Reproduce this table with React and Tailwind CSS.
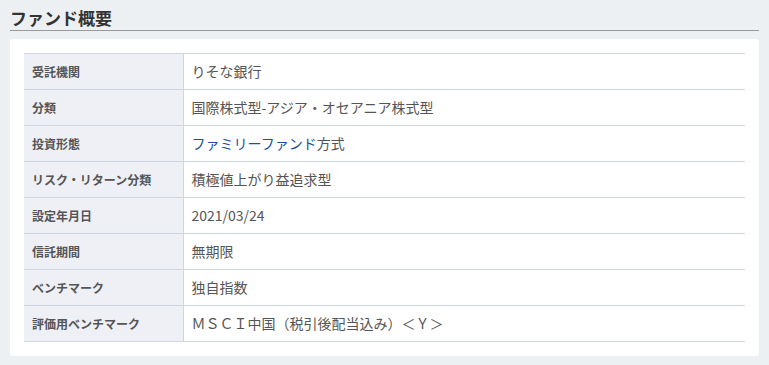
import React from "react";

const rows = [
  { label: "受託機関", value: "りそな銀行" },
  { label: "分類", value: "国際株式型-アジア・オセアニア株式型" },
  {
    label: "投資形態",
    value: (
      <>
        <a href="#" className="text-[#1d4f9e]">
          ファミリーファンド
        </a>
        方式
      </>
    ),
  },
  { label: "リスク・リターン分類", value: "積極値上がり益追求型" },
  { label: "設定年月日", value: "2021/03/24" },
  { label: "信託期間", value: "無期限" },
  { label: "ベンチマーク", value: "独自指数" },
  { label: "評価用ベンチマーク", value: "ＭＳＣＩ中国（税引後配当込み）＜Ｙ＞" },
];

const App = () => {
  return (
    <div
      className="min-h-screen bg-[#edf0f3] px-[10px] pt-[8px]"
      style={{ fontFamily: '"Noto Sans CJK JP", "Noto Sans", sans-serif' }}
    >
      <h2 className="border-b border-[#9a9a9a] pb-[2px] text-[17px] font-bold leading-[20px] text-[#333]">
        ファンド概要
      </h2>

      <div className="mt-[8px] rounded-[3px] bg-white px-[14px] pt-[14px] pb-[14px]">
        <table className="w-full border-collapse">
          <tbody>
            {rows.map((row) => (
              <tr key={row.label} className="border-y border-[#cfd5de]">
                <th className="h-[36px] w-[159px] border-r border-[#cfd5de] bg-[#eef0f5] px-[8px] text-left align-middle text-[12px] font-bold text-[#555]">
                  {row.label}
                </th>
                <td className="h-[36px] px-[8px] align-middle text-[14px] text-[#555]">
                  {row.value}
                </td>
              </tr>
            ))}
          </tbody>
        </table>
      </div>
    </div>
  );
};

export default App;
